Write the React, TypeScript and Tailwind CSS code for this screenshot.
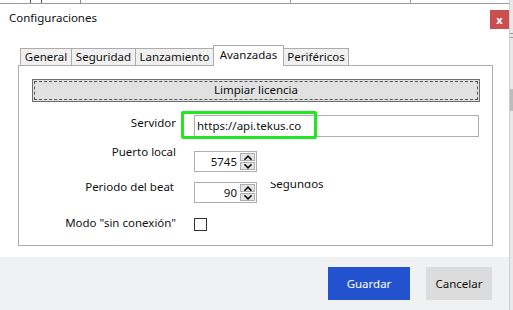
const tabs = [
  { label: 'General', w: 'w-[52px]' },
  { label: 'Seguridad', w: 'w-[65px]' },
  { label: 'Lanzamiento', w: 'w-[79px]' },
  { label: 'Avanzadas', w: 'w-[71px]', active: true },
  { label: 'Periféricos', w: 'w-[66px]' },
]

const Chevron = ({ up }: { up?: boolean }) => (
  <svg width="8" height="5" viewBox="0 0 8 5" fill="none">
    <path
      d={up ? 'M1 4.2L4 1.2L7 4.2' : 'M1 0.8L4 3.8L7 0.8'}
      stroke="#111"
      strokeWidth="1.6"
      strokeLinecap="square"
    />
  </svg>
)

// numeric up/down box
const Spinner = ({ value }: { value: string }) => (
  <div className="flex h-[21px] w-[63px] items-stretch border border-[#adadad] bg-white">
    <div className="flex flex-1 items-center justify-end pr-[3px] text-[11.5px] leading-[16px] text-[#111]">
      {value}
    </div>
    <div className="flex w-[16px] flex-col gap-px py-px pr-px">
      <div className="flex flex-1 items-center justify-center border border-[#adadad] bg-[#e5e5e5]">
        <Chevron up />
      </div>
      <div className="flex flex-1 items-center justify-center border border-[#adadad] bg-[#e5e5e5]">
        <Chevron />
      </div>
    </div>
  </div>
)

export default function App() {
  return (
    <div className="flex h-[310px] w-[513px] overflow-hidden bg-white font-['Noto_Sans',sans-serif] text-[#1a1a1a]">
      <div className="flex w-[509px] flex-col">
        {/* strip of the window behind */}
        <div className="flex h-[4px] border-b border-[#9a9a9a] bg-white">
          <div className="ml-[30px] h-[3px] w-[12px] border-x border-[#555]" />
          <div className="ml-[38px] h-[3px] w-px bg-[#888]" />
          <div className="ml-[209px] h-[3px] w-px bg-[#999]" />
          <div className="ml-[119px] h-[3px] w-px bg-[#999]" />
        </div>

        {/* header */}
        <div className="flex h-[41px] items-start justify-between pl-[9px] pt-[6px]">
          <div className="text-[11.5px] leading-[16px] text-[#111]">Configuraciones</div>
          <div className="flex h-[19px] w-[19px] items-center justify-center bg-[#c9504f] pb-px text-[11px] font-bold leading-none text-white">
            x
          </div>
        </div>

        {/* tabs */}
        <div className="relative z-10 flex h-[21px] items-end pl-[21px] text-[11.5px] leading-[16px] text-[#111]">
          {tabs.map((t) =>
            t.active ? (
              <div
                key={t.label}
                className={`${t.w} -ml-px flex h-[21px] justify-center border-x border-t border-[#acacac] bg-white pt-[1px]`}
              >
                {t.label}
              </div>
            ) : (
              <div
                key={t.label}
                className={`${t.w} -ml-px mb-px flex h-[17px] justify-center border-x border-t border-[#acacac] bg-[#f0f0f0]`}
              >
                {t.label}
              </div>
            )
          )}
        </div>

        {/* panel */}
        <div className="-mt-px ml-[18px] flex h-[181px] w-[475px] flex-col border border-[#acacac] text-[11.5px] leading-[16px] text-[#111]">
          <div className="ml-[13px] mt-[13px] flex h-[23px] w-[448px] border border-[#6e6e6e] bg-[#e1e1e1] p-px">
            <div className="flex flex-1 items-center justify-center border border-dashed border-[#555] pb-px">
              Limpiar licencia
            </div>
          </div>

          <div className="relative mt-[9px] flex h-[28px] items-start">
            <div className="mt-[4px] w-[157px] text-right">Servidor</div>
            <div className="ml-[18px] mt-[4px] flex h-[22px] w-[285px] items-center border border-[#adadad] bg-white pl-[2px]">
              https://api.tekus.co
            </div>
            <div className="absolute left-[162px] top-0 h-[28px] w-[136px] rounded-[2px] border-[3px] border-[#22e622]" />
          </div>

          <div className="mt-[12px] flex h-[21px] items-start">
            <div className="-mt-[7px] w-[157px] text-right">Puerto local</div>
            <div className="ml-[18px]">
              <Spinner value="5745" />
            </div>
          </div>

          <div className="mt-[10px] flex h-[21px] items-start">
            <div className="-mt-[3px] w-[155px] text-right">Periodo del beat</div>
            <div className="ml-[20px]">
              <Spinner value="90" />
            </div>
            <div className="ml-[13px] h-[10px] overflow-hidden">
              <div className="-mt-[6px]">Segundos</div>
            </div>
          </div>

          <div className="mt-[15px] flex h-[13px] items-start">
            <div className="-mt-[3px] w-[157px] text-right">Modo "sin conexión"</div>
            <div className="ml-[18px] h-[13px] w-[13px] border border-[#333] bg-white" />
          </div>
        </div>

        {/* footer */}
        <div className="mt-[11px] flex flex-1 items-start justify-end gap-[16px] bg-[#f0f1f3] pr-[17px] pt-[10px] text-[11.5px]">
          <div className="flex h-[33px] w-[82px] items-center justify-center bg-[#2352cf] text-white">Guardar</div>
          <div className="flex h-[33px] w-[66px] items-center justify-center bg-[#dcdcdc] text-[#111]">Cancelar</div>
        </div>
      </div>

      {/* edge of the window behind */}
      <div className="flex w-[4px] flex-col border-l border-[#cfcfcf] bg-[#e8e8e8]">
        <div className="mt-[33px] h-px bg-[#9a9a9a]" />
        <div className="mt-[3px] h-px bg-[#9a9a9a]" />
        <div className="mt-[51px] h-[22px] bg-[#bdbdbd]" />
      </div>
    </div>
  )
}
